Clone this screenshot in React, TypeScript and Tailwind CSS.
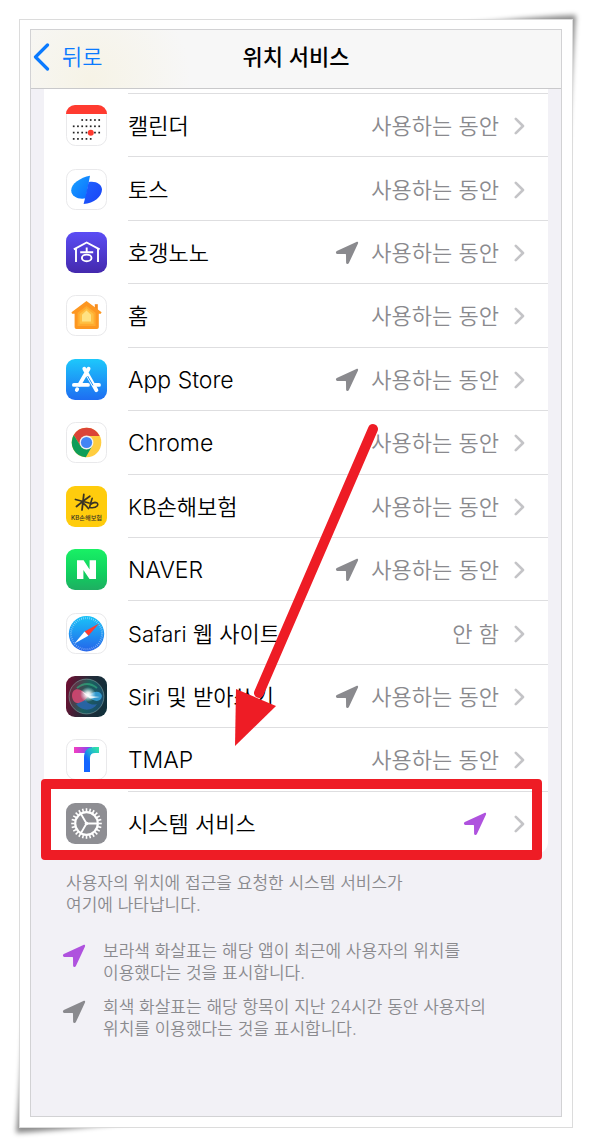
import type { ReactNode } from "react";

const KO = "font-[Inter,'Noto_Sans_CJK_KR',sans-serif]";

function LocationArrow({ className }: { className: string }) {
  return (
    <svg viewBox="0 0 24 24" className={`size-6 shrink-0 ${className}`} fill="currentColor" aria-hidden="true">
      <path d="M21.4 1 L1.8 10 C.4 10.8 .7 12.9 2.3 12.9 L10.4 13 Q11 13 11 13.6 L11.1 21.6 C11.1 23.4 13.2 23.6 13.9 22.1 L23 2.5 C23.5 1.3 22.6.5 21.4 1Z" />
    </svg>
  );
}

function Chevron() {
  return (
    <svg viewBox="0 0 11 18" className="h-[18px] w-[11px] shrink-0" fill="none" stroke="#c4c4c7" strokeWidth="2.6" strokeLinecap="round" strokeLinejoin="round" aria-hidden="true">
      <path d="M1.8 1.8 9 9 1.8 16.2" />
    </svg>
  );
}

function Tile({ fill = "#fff", border = false, children }: { fill?: string; border?: boolean; children: ReactNode }) {
  return (
    <svg viewBox="0 0 41 41" className="size-[41px] shrink-0" aria-hidden="true">
      {border ? (
        <rect x=".5" y=".5" width="40" height="40" rx="9" fill={fill} stroke="#e9e9eb" />
      ) : (
        <rect width="41" height="41" rx="9" fill={fill} />
      )}
      {children}
    </svg>
  );
}

const dots: [number, number][] = [];
[[2, 6], [0, 6], [0, 6], [0, 4]].forEach(([a, b], row) => {
  for (let c = a; c <= b; c++) dots.push([7.7 + c * 4.25, 15 + row * 6.3]);
});

const CalendarIcon = () => (
  <Tile border>
    <path d="M0 9 A9 9 0 0 1 9 0 H32 A9 9 0 0 1 41 9Z" fill="#ff3b30" />
    {dots.map(([x, y]) => (
      <rect key={`${x}-${y}`} x={x - 0.85} y={y - 0.85} width="1.7" height="1.7" fill="#222" />
    ))}
    <circle cx="24.8" cy="27.7" r="3" fill="#ff3b30" />
  </Tile>
);

const TossIcon = () => (
  <Tile border>
    <defs>
      <linearGradient id="toss-a" x1="0" y1="0" x2="1" y2="1">
        <stop offset="0" stopColor="#1aa3ff" />
        <stop offset="1" stopColor="#0a6cff" />
      </linearGradient>
      <linearGradient id="toss-b" x1="0" y1="0" x2="1" y2="1">
        <stop offset="0" stopColor="#1e62ff" />
        <stop offset="1" stopColor="#1a43f5" />
      </linearGradient>
    </defs>
    <path d="M24 6.7 C14.5 8.5 5 14.5 5.2 21.5 C5.5 28 13 30.8 19.8 29.3Z" fill="url(#toss-a)" />
    <path d="M22.6 13 C29.5 11.5 36 15 36 20.5 C36 27.5 28 34.5 17.6 35 L19.6 27Z" fill="url(#toss-b)" />
  </Tile>
);

const HogangIcon = () => (
  <Tile fill="url(#hogang)">
    <defs>
      <linearGradient id="hogang" x1="0" y1="0" x2="0" y2="1">
        <stop offset="0" stopColor="#5b4df5" />
        <stop offset="1" stopColor="#4429ad" />
      </linearGradient>
    </defs>
    <g fill="none" stroke="#fff" strokeWidth="1.9">
      <path d="M7.8 17.3 20.7 10.5 33.6 17.3" />
      <path d="M10 16.5V30M32 16.5V30M20.7 15.6V20.3M14.2 20.3H27.2" />
      <ellipse cx="20.7" cy="25.9" rx="4.8" ry="3.3" />
    </g>
  </Tile>
);

const HomeIcon = () => (
  <Tile border>
    <path d="M28.8 9.2h3v9h-3z" fill="#f78b1d" />
    <path d="M20.5 6 35.6 17.2 34.8 18.8H32.8V32.2Q32.8 34 31 34H10.4Q8.6 34 8.6 32.2V18.8H6L5.5 17.2Z" fill="#fd9721" />
    <path d="M20.5 11 29.6 17.8V31H11.6V17.8Z" fill="#ffab2f" />
    <path d="M20.5 13.2 27.6 19V28.8H13.6V19Z" fill="#ffc044" />
    <path d="M20.5 15.4 25 19.8V26.6H16V19.8Z" fill="#ffe282" />
  </Tile>
);

const AppStoreIcon = () => (
  <Tile fill="url(#store)">
    <defs>
      <linearGradient id="store" x1="0" y1="0" x2="0" y2="1">
        <stop offset="0" stopColor="#1dc8fb" />
        <stop offset="1" stopColor="#1e6df2" />
      </linearGradient>
    </defs>
    <g fill="none" stroke="#fff" strokeWidth="3.8" strokeLinecap="round">
      <path d="M22.6 9.7 13.4 25.6M10.8 31 11.2 30.2M18.3 9.7 30.4 31.2" />
      <path d="M7.9 25.9H22M28.6 25.9H33" />
    </g>
    <path d="M21.6 17 27 26.4" stroke="#1f93f6" strokeWidth="1" />
  </Tile>
);

const ChromeIcon = () => (
  <Tile border>
    <circle cx="20.5" cy="20.5" r="14.8" fill="#ffcd40" />
    <path d="M7.7 13.1 A14.8 14.8 0 0 1 33.7 13.9 H20.5 L14.6 23.9Z" fill="#db4437" />
    <path d="M7.7 13.1 L14.6 23.9 L20.5 27.3 L26.2 24.1 L19.8 35.3 A14.8 14.8 0 0 1 7.7 13.1Z" fill="#0f9d58" />
    <circle cx="20.5" cy="20.5" r="6.9" fill="#f1f1f1" />
    <circle cx="20.5" cy="20.5" r="5.6" fill="#4285f4" />
  </Tile>
);

const KbIcon = () => (
  <Tile fill="#ffcc0d">
    <g fill="none" stroke="#3a3324" strokeLinecap="round" strokeLinejoin="round">
      <path strokeWidth="1.8" d="M17.8 8.5Q17 16 16 24M9.5 13.5Q16 15.2 23 17M23.8 10.3Q17 15 10.5 20.5M15.5 16Q20 19 22.5 22.5" />
      <path strokeWidth="1.6" d="M26.2 12.3Q24.5 17 23.6 21.5Q29 22.5 31.4 19.8Q32.8 16.6 29 16.4Q26.5 16.6 24.3 18.8" />
    </g>
    <text x="20.5" y="34.3" textAnchor="middle" fontSize="6.2" fontWeight="500" fill="#3a3324">
      KB손해보험
    </text>
  </Tile>
);

const NaverIcon = () => (
  <Tile fill="url(#naver)">
    <defs>
      <linearGradient id="naver" x1="0" y1="0" x2="0" y2="1">
        <stop offset="0" stopColor="#19f065" />
        <stop offset=".6" stopColor="#10cf5f" />
        <stop offset="1" stopColor="#1fae62" />
      </linearGradient>
    </defs>
    <path d="M11 11.3H17.6L23.6 20.4V11.3H30V30H23.5L17.4 20.9V30H11Z" fill="#fff" />
  </Tile>
);

const SafariIcon = () => (
  <Tile border>
    <defs>
      <linearGradient id="safari" x1="0" y1="0" x2="0" y2="1">
        <stop offset="0" stopColor="#1ac3f8" />
        <stop offset="1" stopColor="#2464ea" />
      </linearGradient>
    </defs>
    <circle cx="20.5" cy="20.7" r="17.7" fill="url(#safari)" />
    <circle cx="20.5" cy="20.7" r="15.6" fill="none" stroke="#fff" strokeOpacity=".55" strokeWidth="2" strokeDasharray=".6 1.45" />
    <path d="M33 10.6 22.4 22.7 18.6 18.6Z" fill="#ff3b30" />
    <path d="M8.5 30.6 22.4 22.7 18.6 18.6Z" fill="#fff" />
  </Tile>
);

const SiriIcon = () => (
  <Tile fill="url(#siri-bg)">
    <defs>
      <linearGradient id="siri-bg" x1="0" y1=".4" x2="1" y2=".6">
        <stop offset="0" stopColor="#6a1132" />
        <stop offset=".5" stopColor="#232b38" />
        <stop offset="1" stopColor="#10303b" />
      </linearGradient>
      <linearGradient id="siri-orb" x1="0" y1=".3" x2="1" y2=".6">
        <stop offset="0" stopColor="#74253f" />
        <stop offset=".5" stopColor="#1c5f5c" />
        <stop offset="1" stopColor="#194a6a" />
      </linearGradient>
      <radialGradient id="siri-glow">
        <stop offset="0" stopColor="#fff" />
        <stop offset=".3" stopColor="#fff" stopOpacity=".85" />
        <stop offset="1" stopColor="#c8f4ff" stopOpacity="0" />
      </radialGradient>
      <filter id="siri-soft">
        <feGaussianBlur stdDeviation=".7" />
      </filter>
    </defs>
    <circle cx="20.5" cy="20.5" r="17.4" fill="url(#siri-orb)" stroke="#7b9d9c" strokeOpacity=".7" strokeWidth=".9" />
    <g filter="url(#siri-soft)">
      <path d="M6 20C6 11 15 11 22 20C17 29 7 30 6 20Z" fill="#e34976" fillOpacity=".8" />
      <path d="M22 20C28 14 35 15 36 20C35 27 27 26 22 20Z" fill="#36a3df" fillOpacity=".85" />
      <path d="M10 28C16 36 27 35 31 28C25 30 20 26 20 24Z" fill="#2a66b4" fillOpacity=".8" />
      <path d="M11 12Q21 4 31 12" fill="none" stroke="#32b884" strokeWidth="2" strokeOpacity=".6" />
    </g>
    <ellipse cx="22" cy="18.5" rx="8" ry="7.5" fill="url(#siri-glow)" />
    <path d="M15 15 24 20 34 21 24 22.5Z" fill="#fff" fillOpacity=".8" />
  </Tile>
);

const TmapIcon = () => (
  <Tile border>
    <defs>
      <linearGradient id="tmap-a" x1="0" y1="0" x2="1" y2="0">
        <stop offset="0" stopColor="#f53ec0" />
        <stop offset="1" stopColor="#7447f5" />
      </linearGradient>
      <linearGradient id="tmap-b" x1="1" y1="0" x2=".2" y2="1">
        <stop offset="0" stopColor="#35eba0" />
        <stop offset=".4" stopColor="#1eb5d0" />
        <stop offset=".7" stopColor="#1465ff" />
      </linearGradient>
    </defs>
    <path d="M8 8H26V14H8Z" fill="url(#tmap-a)" />
    <path d="M33 8V14H29Q24 14 24 19V33H18V18.5Q18 8 28.5 8Z" fill="url(#tmap-b)" />
  </Tile>
);

const teeth = Array.from({ length: 24 }, (_, i) => i * 15);

const SettingsIcon = () => (
  <Tile fill="#8e8e93">
    <g fill="none" stroke="#fff">
      <circle cx="20.5" cy="20.5" r="11.3" strokeWidth="2.2" />
      {teeth.map((a) => (
        <path key={a} d="M20.5 8.5V5.2" strokeWidth="1.6" transform={`rotate(${a} 20.5 20.5)`} />
      ))}
      <path d="M20.5 20.5H31.5M20.5 20.5 15 11M20.5 20.5 15 30" strokeWidth="1.8" />
    </g>
    <circle cx="20.5" cy="20.5" r="1.8" fill="#fff" />
  </Tile>
);

type Item = { name: string; icon: ReactNode; value?: string; arrow?: "gray" | "purple"; marked?: boolean };

const WHILE_USING = "사용하는 동안";

const items: Item[] = [
  { name: "캘린더", icon: <CalendarIcon />, value: WHILE_USING },
  { name: "토스", icon: <TossIcon />, value: WHILE_USING },
  { name: "호갱노노", icon: <HogangIcon />, value: WHILE_USING, arrow: "gray" },
  { name: "홈", icon: <HomeIcon />, value: WHILE_USING },
  { name: "App Store", icon: <AppStoreIcon />, value: WHILE_USING, arrow: "gray" },
  { name: "Chrome", icon: <ChromeIcon />, value: WHILE_USING },
  { name: "KB손해보험", icon: <KbIcon />, value: WHILE_USING },
  { name: "NAVER", icon: <NaverIcon />, value: WHILE_USING, arrow: "gray" },
  { name: "Safari 웹 사이트", icon: <SafariIcon />, value: "안 함" },
  { name: "Siri 및 받아쓰기", icon: <SiriIcon />, value: WHILE_USING, arrow: "gray" },
  { name: "TMAP", icon: <TmapIcon />, value: WHILE_USING },
  { name: "시스템 서비스", icon: <SettingsIcon />, arrow: "purple", marked: true },
];

const isLatin = (s: string) => /^[A-Za-z ]+$/.test(s);

function Row({ name, icon, value, arrow, marked }: Item) {
  return (
    <li className="relative flex min-h-[63px] flex-1">
      <a href="#" className="flex flex-1 items-stretch gap-[21px] pl-[22px]">
        <span className="flex items-center pt-0.5">{icon}</span>
        <span className="flex flex-1 items-center border-t border-[#dedee0] pt-0.5 pr-[23px] text-[22px] leading-8 font-[350] whitespace-nowrap">
          <span className={`flex-1 text-black ${isLatin(name) ? "text-[23px]" : ""}`}>{name}</span>
          {arrow && <LocationArrow className={`mr-3 ${arrow === "gray" ? "text-[#8a8a8e]" : "text-[#af52de]"}`} />}
          <span className="text-[#8a8a8e]">{value}</span>
          <span className="ml-[15px] flex">
            <Chevron />
          </span>
        </span>
      </a>
      {marked && <span className="pointer-events-none absolute -top-3 right-1.5 -bottom-1.5 -left-[3px] z-10 rounded-sm border-10 border-[#ee1c25]" />}
    </li>
  );
}

function CurlShadows() {
  return (
    <>
      <svg viewBox="0 0 160 200" className="absolute -bottom-5 -left-[19px] h-[200px] w-40" aria-hidden="true">
        <filter id="curl-a" x="-20%" y="-20%" width="140%" height="140%">
          <feGaussianBlur stdDeviation="2.5" />
        </filter>
        <path d="M26 20 Q21 130 16 185 Q70 182 150 172 L60 120Z" fill="#000" fillOpacity=".45" filter="url(#curl-a)" />
      </svg>
      <svg viewBox="0 0 160 200" className="absolute -top-[19px] -right-[19px] h-[200px] w-40" aria-hidden="true">
        <filter id="curl-b" x="-20%" y="-20%" width="140%" height="140%">
          <feGaussianBlur stdDeviation="2.5" />
        </filter>
        <path d="M134 185 Q140 70 144 15 Q90 17 10 27 L100 80Z" fill="#000" fillOpacity=".45" filter="url(#curl-b)" />
      </svg>
    </>
  );
}

function PointerArrow() {
  return (
    <svg viewBox="0 0 146 324" className="pointer-events-none absolute top-[393px] left-[203px] z-10 h-[324px] w-[146px]" aria-hidden="true">
      <path d="M139 6 25 270" stroke="#ee1c25" strokeWidth="10" strokeLinecap="round" />
      <path d="M1 323 2 266 42 283Z" fill="#ee1c25" />
    </svg>
  );
}

export default function App() {
  return (
    <div className={`bg-white p-[19px] text-black ${KO}`}>
      <div className="relative">
        <CurlShadows />
        <main className="relative border border-[#dcdcdc] bg-white px-2.5 pt-[9px] pb-2.5">
          <div className="relative border border-[#d2d2d4] bg-[#f2f1f6] pb-[76px]">
            <header className="grid h-[59px] grid-cols-[1fr_auto_1fr] items-center border-b border-[#c9c9cb] bg-[#f7f7f7] bg-[radial-gradient(circle_at_60px_50px,#f6f3e6,#f7f7f7_100px)] px-0.5 pb-1">
              <a href="#" className="flex items-center gap-3 text-[22px] leading-8 font-[350] text-[#0a7aff]">
                <svg viewBox="0 0 17 28" className="h-7 w-[17px]" fill="none" stroke="currentColor" strokeWidth="3.2" strokeLinecap="round" strokeLinejoin="round" aria-hidden="true">
                  <path d="M14.5 2 2.5 14 14.5 26" />
                </svg>
                뒤로
              </a>
              <h1 className="text-[22px] leading-8 font-medium">위치 서비스</h1>
            </header>
            <ul className="mx-[13px] flex h-[765px] flex-col rounded-b-xl bg-white pt-1">
              {items.map((item) => (
                <Row key={item.name} {...item} />
              ))}
            </ul>
            <div className="pr-10 pl-[35px] pt-[18px] text-[17px] leading-[22px] font-[350] text-[#8a8a8e]">
              <p>
                사용자의 위치에 접근을 요청한 시스템 서비스가
                <br />
                여기에 나타납니다.
              </p>
              <div className="-ml-1 mt-6 flex flex-col gap-3">
                <div className="flex gap-[17px]">
                  <LocationArrow className="mt-1 text-[#af52de]" />
                  <p>
                    보라색 화살표는 해당 앱이 최근에 사용자의 위치를
                    <br />
                    이용했다는 것을 표시합니다.
                  </p>
                </div>
                <div className="flex gap-[17px]">
                  <LocationArrow className="mt-1 text-[#8a8a8e]" />
                  <p>
                    회색 화살표는 해당 항목이 지난 24시간 동안 사용자의
                    <br />
                    위치를 이용했다는 것을 표시합니다.
                  </p>
                </div>
              </div>
            </div>
            <PointerArrow />
          </div>
        </main>
      </div>
    </div>
  );
}
